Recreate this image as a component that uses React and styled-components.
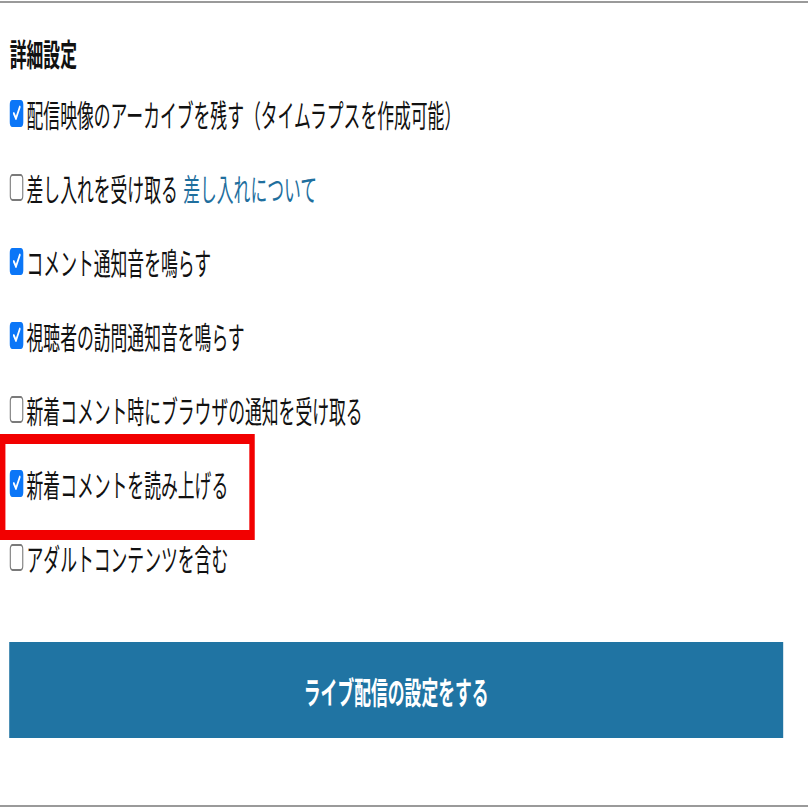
import React from "react";
import styled, {createGlobalStyle} from "styled-components";

const SQUEEZE = 0.542;
const SHEET_WIDTH = Math.round(808 / SQUEEZE);

const GlobalStyle = createGlobalStyle`
  html, body {
    margin: 0;
    padding: 0;
    background: #fff;
    overflow: hidden;
  }
  body {
    font-family: "Noto Sans CJK JP", "Noto Sans", sans-serif;
    color: #111;
  }
`;

const Sheet = styled.div`
  width: ${SHEET_WIDTH}px;
  height: 808px;
  transform: scaleX(${SQUEEZE});
  transform-origin: 0 0;
  display: flex;
  flex-direction: column;
`;

const Rule = styled.div`
  height: 2px;
  background: #9a9a9a;
  margin-top: ${props => props.top || 0}px;
  margin-bottom: ${props => props.bottom || 0}px;
  flex: none;
`;

const Section = styled.section`
  display: flex;
  flex-direction: column;
  padding: 30px 0 0 18px;
`;

const Heading = styled.h3`
  margin: 0 0 4px;
  font-size: 31px;
  line-height: 40px;
  font-weight: 700;
`;

const OptionRow = styled.label`
  position: relative;
  display: flex;
  align-items: center;
  height: 74px;
  font-size: 31px;
  line-height: 74px;
  white-space: nowrap;

  ${props =>
    props.marked &&
    `
    &::after {
      content: "";
      position: absolute;
      left: -18px;
      top: -13px;
      width: 470px;
      height: 106px;
      border: 10px solid #f20000;
      box-sizing: border-box;
      pointer-events: none;
    }
  `}
`;

const Box = styled.span`
  flex: none;
  width: 25px;
  height: 27px;
  margin: 0 6px 2px 0;
  border-radius: 5px;
  box-sizing: border-box;
  display: flex;
  align-items: center;
  justify-content: center;
  background: ${props => (props.checked ? "#0b76f7" : "#fff")};
  border: ${props => (props.checked ? "none" : "2px solid #7a7a7a")};
`;

const Link = styled.a`
  color: #1f6f9e;
  text-decoration: none;
  margin-left: 10px;
`;

const SubmitButton = styled.button`
  margin: 47px 0 0 17px;
  width: 1428px;
  height: 96px;
  border: none;
  background: #2074a3;
  color: #fff;
  font-family: inherit;
  font-size: 31px;
  font-weight: 700;
  flex: none;
`;

const Spacer = styled.div`
  flex: 1;
`;

function Checkbox({checked}) {
  return (
    <Box checked={checked}>
      {checked && (
        <svg width="18" height="20" viewBox="0 0 18 20">
          <path
            d="M3.5 10.5 L7.5 15.5 L14.5 4"
            fill="none"
            stroke="#fff"
            strokeWidth="3"
            strokeLinecap="round"
            strokeLinejoin="round"
          />
        </svg>
      )}
    </Box>
  );
}

const options = [
  {label: "配信映像のアーカイブを残す（タイムラプスを作成可能）", checked: true},
  {label: "差し入れを受け取る", checked: false, link: "差し入れについて"},
  {label: "コメント通知音を鳴らす", checked: true},
  {label: "視聴者の訪問通知音を鳴らす", checked: true},
  {label: "新着コメント時にブラウザの通知を受け取る", checked: false},
  {label: "新着コメントを読み上げる", checked: true, marked: true},
  {label: "アダルトコンテンツを含む", checked: false},
];

export default function App() {
  return (
    <>
      <GlobalStyle />
      <Sheet>
        <Rule top={1} />
        <Section>
          <Heading>詳細設定</Heading>
          {options.map((opt, i) => (
            <OptionRow key={i} marked={opt.marked}>
              <Checkbox checked={opt.checked} />
              <span>{opt.label}</span>
              {opt.link && <Link href="#">{opt.link}</Link>}
            </OptionRow>
          ))}
        </Section>
        <SubmitButton>ライブ配信の設定をする</SubmitButton>
        <Spacer />
        <Rule bottom={1} />
      </Sheet>
    </>
  );
}
